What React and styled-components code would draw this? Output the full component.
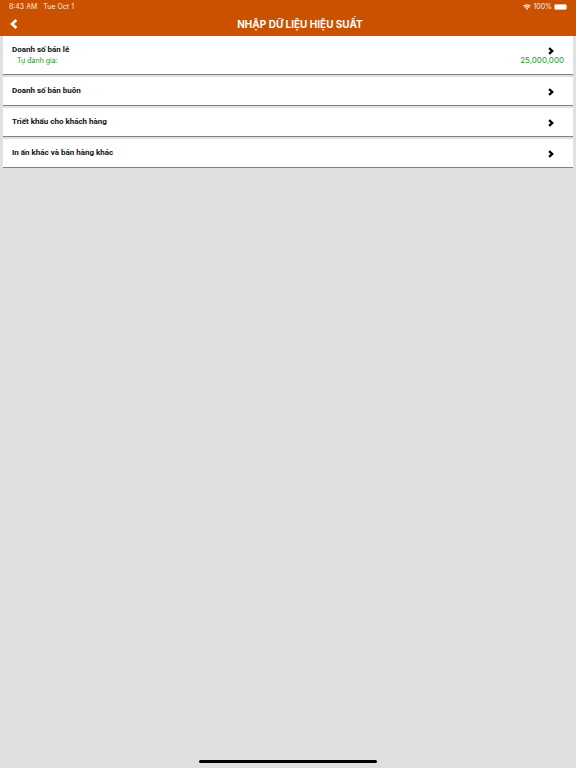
import React from 'react';
import styled, { createGlobalStyle } from 'styled-components';

const GlobalStyle = createGlobalStyle`
  *, *::before, *::after { box-sizing: border-box; }
  body {
    margin: 0;
    background: #e0e0e0;
    font-family: Inter, Roboto, "Liberation Sans", sans-serif;
  }
  button { font: inherit; color: inherit; border: 0; padding: 0; cursor: pointer; }
`;

const Screen = styled.div`
  min-height: 100vh;
  display: flex;
  flex-direction: column;
  background: #e0e0e0;
`;

const Header = styled.header`
  background: #ca5100;
  color: #fff;
`;

const StatusBar = styled.div`
  display: flex;
  justify-content: space-between;
  height: 12px;
  padding: 2px 8px 0 9px;
  font-size: 7px;
  line-height: 10px;
  color: #ffece0;
`;

const StatusGroup = styled.div`
  display: flex;
  align-items: center;
  gap: ${({ $gap }) => $gap}px;
`;

const NavBar = styled.div`
  display: grid;
  grid-template-columns: 24px 1fr 24px;
  align-items: center;
  height: 24px;
  padding: 0 2px;
`;

const BackButton = styled.button`
  display: flex;
  align-items: center;
  justify-content: center;
  height: 22px;
  background: transparent;
`;

const Title = styled.h1`
  margin: 0;
  padding-left: 24px;
  text-align: center;
  font-size: 10px;
  line-height: 24px;
  font-weight: 700;
`;

const List = styled.ul`
  flex: 1;
  display: flex;
  flex-direction: column;
  gap: 2px;
  list-style: none;
  margin: 0;
  padding: 0 3px;
`;

const Card = styled.button`
  display: block;
  width: 100%;
  min-height: 29px;
  padding: ${({ $detailed }) => ($detailed ? '8px 9px' : '7px 9px 8px')};
  background: #fff;
  border-bottom: 1px solid #808080;
  color: #111;
  text-align: left;
`;

const CardHeading = styled.span`
  display: flex;
  justify-content: space-between;
  height: 11px;
  padding-right: 10px;
  font-family: Roboto, Inter, sans-serif;
  font-size: 8px;
  line-height: 11px;
  font-weight: 700;
`;

const CardDetail = styled.span`
  display: flex;
  align-items: center;
  justify-content: space-between;
  padding-left: 5px;
  height: 11px;
  font-size: 7px;
  line-height: 11px;
  color: #229c22;
`;

const Amount = styled.span`
  font-size: 8px;
`;

const ChevronIcon = styled.svg`
  display: block;
  margin-top: 3px;
`;

const HomeArea = styled.footer`
  display: flex;
  justify-content: center;
  padding-bottom: 5px;
`;

const HomeIndicator = styled.div`
  width: 31%;
  height: 3px;
  border-radius: 2px;
  background: #000;
`;

const Chevron = () => (
  <ChevronIcon width="6" height="8" viewBox="0 0 6 8" aria-hidden="true">
    <path d="M1.1 1.2 L4.2 4 L1.1 6.8" fill="none" stroke="#000" strokeWidth="2.3" />
  </ChevronIcon>
);

const WifiIcon = () => (
  <svg width="8" height="6" viewBox="0 0 16 12" aria-hidden="true">
    <path d="M1 4.5a10 10 0 0 1 14 0M3.6 7.2a6.2 6.2 0 0 1 8.8 0" fill="none" stroke="currentColor" strokeWidth="2.3" />
    <path d="M5.6 9.2a3.5 3.5 0 0 1 4.8 0L8 11.8z" fill="currentColor" />
  </svg>
);

const BatteryIcon = () => (
  <svg width="14" height="6" viewBox="0 0 14 6" aria-hidden="true">
    <rect x="0.25" y="0.25" width="12.4" height="5.5" rx="1.6" fill="none" stroke="#f0b48c" strokeWidth="0.5" />
    <rect x="0.6" y="0.6" width="11.7" height="4.8" rx="1.2" fill="#fff" />
    <path d="M13.1 2.1q.8.9 0 1.8z" fill="#f0b48c" />
  </svg>
);

const entries = [
  { name: 'Doanh số bán lẻ', label: 'Tự đánh giá:', amount: '25,000,000' },
  { name: 'Doanh số bán buôn' },
  { name: 'Triết khấu cho khách hàng' },
  { name: 'In ấn khác và bán hàng khác' },
];

export default function App() {
  return (
    <>
      <GlobalStyle />
      <Screen>
        <Header>
          <StatusBar>
            <StatusGroup $gap={6}>
              <span>8:43 AM</span>
              <span>Tue Oct 1</span>
            </StatusGroup>
            <StatusGroup $gap={2}>
              <WifiIcon />
              <span>100%</span>
              <BatteryIcon />
            </StatusGroup>
          </StatusBar>
          <NavBar>
            <BackButton type="button" aria-label="Quay lại">
              <svg width="8" height="10" viewBox="0 0 8 10" aria-hidden="true">
                <path d="M6.5 1 L2 5 L6.5 9" fill="none" stroke="#fff" strokeWidth="2.6" />
              </svg>
            </BackButton>
            <Title>NHẬP DỮ LIỆU HIỆU SUẤT</Title>
          </NavBar>
        </Header>
        <List>
          {entries.map((entry) => (
            <li key={entry.name}>
              <Card type="button" $detailed={Boolean(entry.amount)}>
                <CardHeading>
                  {entry.name}
                  <Chevron />
                </CardHeading>
                {entry.amount && (
                  <CardDetail>
                    <span>{entry.label}</span>
                    <Amount>{entry.amount}</Amount>
                  </CardDetail>
                )}
              </Card>
            </li>
          ))}
        </List>
        <HomeArea>
          <HomeIndicator />
        </HomeArea>
      </Screen>
    </>
  );
}
